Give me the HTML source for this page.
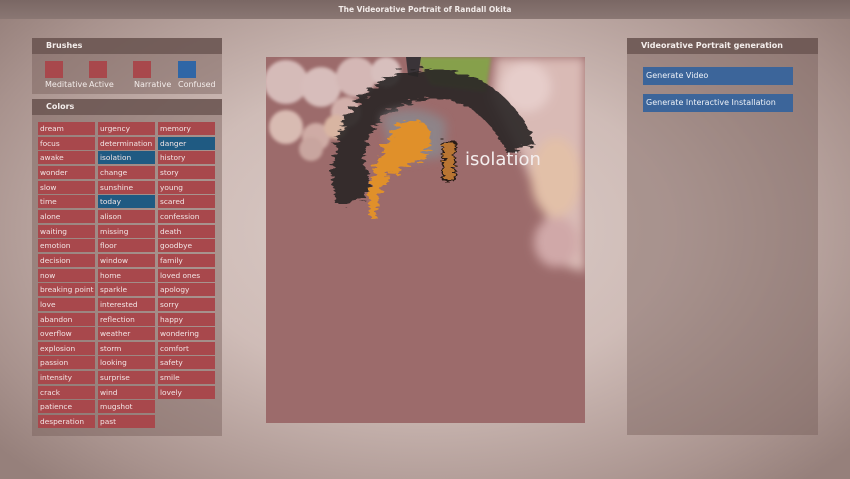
<!DOCTYPE html>
<html><head><meta charset="utf-8"><style>
*{margin:0;padding:0;box-sizing:border-box}
body{width:850px;height:479px;overflow:hidden;position:relative;font-family:"DejaVu Sans","Liberation Sans",sans-serif;
background:radial-gradient(ellipse 65% 72% at 50% 48%,#dccdc9 0%,#cfbcb7 45%,#a8928d 85%,#96807b 100%)}
.title{position:absolute;left:0;top:0;width:850px;height:19px;background:linear-gradient(#7a6764,#8a7773);color:#f2ebe9;font-size:7.5px;font-weight:bold;text-align:center;line-height:20px}
.panel{position:absolute;background:rgba(120,96,92,0.45)}
.hdr{position:absolute;left:0;height:16px;background:rgba(105,84,80,0.8);color:#f4eeec;font-size:8px;font-weight:bold;line-height:16px;padding-left:14px}
.b{position:absolute;width:57px;height:13px;background:#a8484c;color:#f3e6e6;font-size:7.4px;line-height:13px;padding-left:2px;white-space:nowrap;overflow:hidden}
.b.s{background:#1f5a82}
.sq{position:absolute;top:61px;width:18px;height:17px;background:#a8484c}
.lbl{position:absolute;top:80px;color:#f3ecea;font-size:8px}
.gb{position:absolute;left:643px;width:150px;height:18px;background:#3c659a;color:#eef2f8;font-size:8px;line-height:18px;padding-left:3px}
</style></head><body>
<div class="title">The Videorative Portrait of Randall Okita</div>

<div class="panel" style="left:32px;top:38px;width:190px;height:56px"><div class="hdr" style="top:0;width:190px">Brushes</div></div>
<div class="sq" style="left:45px"></div><div class="sq" style="left:89px"></div><div class="sq" style="left:133px"></div><div class="sq" style="left:178px;background:#2f66a6"></div>
<div class="lbl" style="left:45px">Meditative</div><div class="lbl" style="left:89px">Active</div><div class="lbl" style="left:134px">Narrative</div><div class="lbl" style="left:178px">Confused</div>

<div class="panel" style="left:32px;top:99px;width:190px;height:337px"><div class="hdr" style="top:0;width:190px">Colors</div></div>
<div id="g"></div>

<div class="panel" style="left:627px;top:38px;width:191px;height:397px"><div class="hdr" style="top:0;width:191px">Videorative Portrait generation</div></div>
<div class="gb" style="top:67px">Generate Video</div>
<div class="gb" style="top:94px">Generate Interactive Installation</div>

<svg style="position:absolute;left:266px;top:57px" width="319" height="366" viewBox="0 0 319 366">
<defs>
<filter id="f1" x="-20%" y="-20%" width="140%" height="140%"><feGaussianBlur stdDeviation="1.5"/></filter>
<filter id="f3" x="-20%" y="-20%" width="140%" height="140%"><feGaussianBlur stdDeviation="5"/></filter>
<filter id="r" x="-20%" y="-20%" width="140%" height="140%"><feTurbulence type="fractalNoise" baseFrequency="0.08 0.3" numOctaves="2" result="n"/><feDisplacementMap in="SourceGraphic" in2="n" scale="14"/></filter>
</defs>
<rect width="319" height="366" fill="#9c6b6b"/>
<g filter="url(#f3)">
<path d="M230 0 H319 V215 L300 210 L280 160 L255 100 L225 40 Z" fill="#d9bab5"/>
<ellipse cx="290" cy="120" rx="25" ry="40" fill="#e2c0a8"/>
<ellipse cx="290" cy="185" rx="22" ry="25" fill="#d0a8a8"/>
<ellipse cx="260" cy="30" rx="25" ry="25" fill="#e6cdca"/>
</g>
<g opacity="0.8" filter="url(#f1)">
<circle cx="20" cy="25" r="22" fill="#e4cfcc"/><circle cx="55" cy="30" r="20" fill="#e6d2cf"/>
<circle cx="20" cy="70" r="17" fill="#e8cfc4"/><circle cx="50" cy="80" r="14" fill="#dcbcb4"/>
<circle cx="90" cy="20" r="20" fill="#e2cbc8"/><circle cx="80" cy="55" r="15" fill="#e0c2bc"/>
<circle cx="70" cy="70" r="12" fill="#e8c8b0"/><circle cx="120" cy="15" r="15" fill="#e6d4d2"/>
<circle cx="45" cy="92" r="12" fill="#d4b4ac"/>
</g>
<path d="M150 0 L225 0 L220 35 L165 28 Z" fill="#86a04c" filter="url(#f1)"/>
<path d="M140 0 L155 0 L152 20 L142 18Z" fill="#3a3438"/>
<g filter="url(#r)" opacity="0.9">
<path d="M85 145 C75 95 90 50 135 32 C185 15 235 40 255 92" stroke="#2c2626" stroke-width="30" fill="none"/>
<path d="M70 120 C78 110 95 100 95 135" stroke="#2c2626" stroke-width="18" fill="none"/>
</g>
<path d="M115 60 C140 45 170 55 180 65 L178 100 L130 105 Z" fill="#8a8a90" opacity="0.8" filter="url(#f3)"/>
<g filter="url(#r)">
<path d="M130 70 C150 55 172 65 162 95 C150 110 125 110 115 130 C110 150 112 168 105 162 C98 140 108 100 130 70Z" fill="#e0902c"/>
</g>
<rect x="177" y="85" width="12" height="38" fill="#b87430" stroke="#2a1e18" stroke-width="2" filter="url(#r)"/>
<text x="199" y="108" fill="#f4eeee" font-family="DejaVu Sans, sans-serif" font-size="18">isolation</text>
</svg>

<script>
var c=[["dream","focus","awake","wonder","slow","time","alone","waiting","emotion","decision","now","breaking point","love","abandon","overflow","explosion","passion","intensity","crack","patience","desperation"],
["urgency","determination","isolation","change","sunshine","today","alison","missing","floor","window","home","sparkle","interested","reflection","weather","storm","looking","surprise","wind","mugshot","past"],
["memory","danger","history","story","young","scared","confession","death","goodbye","family","loved ones","apology","sorry","happy","wondering","comfort","safety","smile","lovely"]];
var xs=[38,98,158],h="";
c.forEach(function(col,i){col.forEach(function(t,j){var s=(t=="danger"||t=="isolation"||t=="today")?" s":"";
h+='<div class="b'+s+'" style="left:'+xs[i]+'px;top:'+(122+j*14.65).toFixed(1)+'px">'+t+'</div>';});});
document.getElementById("g").innerHTML=h;
</script>
</body></html>
